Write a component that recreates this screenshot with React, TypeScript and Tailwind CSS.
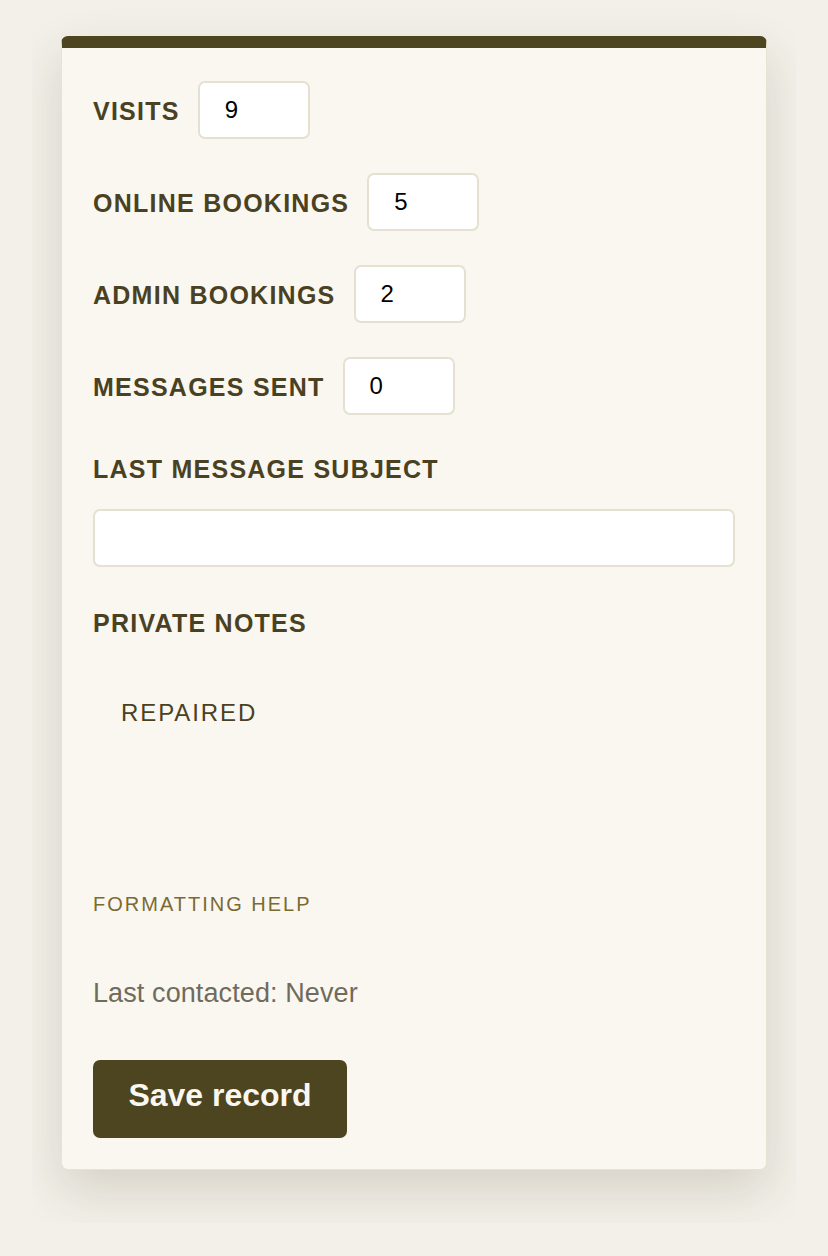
import React from "react";

const font = { fontFamily: '"Liberation Sans", Arial, sans-serif' };

function NumRow({ label, value, last }: { label: string; value: string; last?: boolean }) {
  return (
    <div className={`flex items-center h-[58px] ${last ? "" : "mb-[34px]"}`}>
      <label className="text-[25px] leading-[28px] pt-[2px] font-bold uppercase tracking-[0.05em] text-[#4a4122] mr-[18px]">
        {label}
      </label>
      <input
        readOnly
        value={value}
        className="w-[112px] h-[58px] bg-white border-2 border-[#e6e0d2] rounded-[7px] pl-[25px] text-[24px] text-black outline-none"
        style={font}
      />
    </div>
  );
}

export default function App() {
  return (
    <div className="min-h-[1256px] bg-[#f3f0e9] pt-[7px]" style={font}>
      <div className="ml-[32px] w-[764px] overflow-hidden px-[29px] pt-[29px] pb-[53px]">
        <div className="bg-[#faf7f0] border border-[#e8e2d4] border-t-[12px] border-t-[#4d4420] rounded-[7px] shadow-[0_20px_50px_rgba(60,50,20,0.16)] pl-[31px] pr-[31px] pt-[33px] pb-[31px]">
          <NumRow label="Visits" value="9" />
          <NumRow label="Online bookings" value="5" />
          <NumRow label="Admin bookings" value="2" />
          <NumRow label="Messages sent" value="0" last />

          <div className="mt-[40px] text-[25px] leading-[28px] font-bold uppercase tracking-[0.05em] text-[#4a4122]">
            Last message subject
          </div>
          <input
            readOnly
            value=""
            className="block mt-[26px] w-full h-[58px] bg-white border-2 border-[#e6e0d2] rounded-[7px] px-[24px] text-[24px] outline-none"
            style={font}
          />

          <div className="mt-[42px] text-[25px] leading-[28px] font-bold uppercase tracking-[0.05em] text-[#4a4122]">
            Private notes
          </div>
          <div className="mt-[62px] pl-[28px] text-[24px] leading-[28px] uppercase tracking-[0.08em] text-[#4a4122]">
            Repaired
          </div>

          <div className="mt-[165px] text-[20px] leading-[24px] uppercase tracking-[0.1em] text-[#7a6a32]">
            Formatting help
          </div>

          <div className="mt-[61px] text-[27px] leading-[32px] tracking-[0.1px] text-[#6f6b5d]">
            Last contacted: Never
          </div>

          <button
            className="mt-[51px] w-[254px] h-[78px] pb-[8px] rounded-[7px] bg-[#4d4420] text-[#faf7f0] text-[32px] font-bold"
            style={font}
          >
            Save record
          </button>
        </div>
      </div>
    </div>
  );
}
